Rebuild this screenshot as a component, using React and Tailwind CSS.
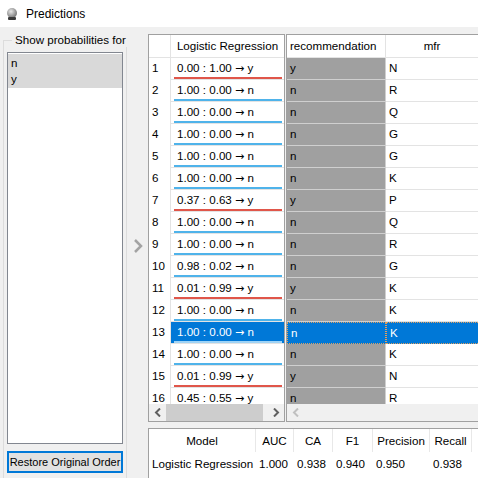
import React from "react";

const rows = [
  ["0.00 : 1.00", "y", "y", "N"],
  ["1.00 : 0.00", "n", "n", "R"],
  ["1.00 : 0.00", "n", "n", "Q"],
  ["1.00 : 0.00", "n", "n", "G"],
  ["1.00 : 0.00", "n", "n", "G"],
  ["1.00 : 0.00", "n", "n", "K"],
  ["0.37 : 0.63", "y", "y", "P"],
  ["1.00 : 0.00", "n", "n", "Q"],
  ["1.00 : 0.00", "n", "n", "R"],
  ["0.98 : 0.02", "n", "n", "G"],
  ["0.01 : 0.99", "y", "y", "K"],
  ["1.00 : 0.00", "n", "n", "K"],
  ["1.00 : 0.00", "n", "n", "K"],
  ["1.00 : 0.00", "n", "n", "K"],
  ["0.01 : 0.99", "y", "y", "N"],
  ["0.45 : 0.55", "y", "n", "R"],
];

const SELECTED = 12;

const scores = [
  ["Model", "Logistic Regression", "w-[107px]"],
  ["AUC", "1.000", "w-[38px]"],
  ["CA", "0.938", "w-[39px]"],
  ["F1", "0.940", "w-[40px]"],
  ["Precision", "0.950", "w-[57px]"],
  ["Recall", "0.938", "w-[42px]"],
];

function Chevron({ dir, color }) {
  return (
    <svg width="8" height="9" viewBox="0 0 8 9">
      <polyline
        points={dir === "left" ? "6,0.5 2,4.5 6,8.5" : "2,0.5 6,4.5 2,8.5"}
        fill="none"
        stroke={color}
        strokeWidth="2"
      />
    </svg>
  );
}

function PredCell({ text, cls, selected }) {
  const bar = selected
    ? "bg-[#9fd3f5]"
    : cls === "y"
    ? "bg-[#e0564a]"
    : "bg-[#4fb3ea]";
  return (
    <div
      className={`h-[22px] border-b border-[#e3e3e3] pt-[3px] pl-[2px] pr-[2px] ${
        selected ? "bg-[#0078d7] text-white" : ""
      }`}
    >
      <div className="leading-[14px] pl-[4px] whitespace-nowrap">
        {text}{" "}
        <span className="text-[11px]" style={{ fontFamily: '"DejaVu Sans", sans-serif' }}>
          →
        </span>{" "}
        {cls}
      </div>
      <div className={`h-[2px] mt-[1px] ml-[1px] ${bar}`} />
    </div>
  );
}

export default function App() {
  return (
    <div
      className="w-[478px] h-[478px] overflow-hidden bg-[#f0f0f0] text-[11.6px] text-black flex flex-col whitespace-nowrap"
      style={{ fontFamily: '"Liberation Sans", Arial, sans-serif' }}
    >
      <div className="h-[27px] bg-white flex items-center shrink-0">
        <svg width="12" height="14" viewBox="0 0 12 14" className="ml-[6px]">
          <defs>
            <radialGradient id="g" cx="0.4" cy="0.35" r="0.7">
              <stop offset="0" stopColor="#e8e8e8" />
              <stop offset="1" stopColor="#6e6e6e" />
            </radialGradient>
          </defs>
          <circle cx="6" cy="6" r="5" fill="url(#g)" />
          <rect x="2" y="10" width="8" height="3" rx="1" fill="#3a3a3a" />
        </svg>
        <span className="ml-[8px] text-[12px]">Predictions</span>
      </div>

      <div className="flex flex-1 min-h-0">
        <div className="w-[127px] pl-[3px] pt-[13px] shrink-0">
          <div className="relative h-[440px] border border-[#dcdcdc] px-[3px] pt-[11px]">
            <div className="absolute left-[8px] -top-[8px] bg-[#f0f0f0] px-[3px] leading-[14px]">
              Show probabilities for
            </div>
            <div className="h-[392px] border border-[#828790] bg-white">
              <div className="bg-[#d9d9d9] h-[17px] leading-[17px] pl-[3px] mt-[1px]">n</div>
              <div className="bg-[#d9d9d9] h-[17px] leading-[15px] pl-[3px]">y</div>
            </div>
            <div className="mt-[7px] h-[22px] border-2 border-[#0078d7] bg-[#e1e1e1] flex items-center justify-center text-[11px]">
              Restore Original Order
            </div>
          </div>
        </div>

        <div className="w-[21px] shrink-0 flex items-center justify-center pb-[14px]">
          <svg width="10" height="14" viewBox="0 0 10 14">
            <polyline points="2,1 8,7 2,13" fill="none" stroke="#a3a3a3" strokeWidth="2.5" />
          </svg>
        </div>

        <div className="flex-1 flex flex-col pt-[7px] min-w-0">
          <div className="flex h-[388px] shrink-0">
            <div className="w-[137px] border border-[#a0a0a0] bg-white flex flex-col shrink-0">
              <div className="flex h-[23px] border-b border-[#e3e3e3] shrink-0">
                <div className="w-[22px] border-r border-[#e3e3e3]" />
                <div className="flex-1 flex items-center justify-center">Logistic Regression</div>
              </div>
              <div className="flex h-[346px] overflow-hidden">
                <div className="w-[22px] border-r border-[#e3e3e3] shrink-0">
                  {rows.map((r, i) => (
                    <div key={i} className="h-[22px] pt-[3px] pl-[3px] leading-[14px]">
                      {i + 1}
                    </div>
                  ))}
                </div>
                <div className="flex-1">
                  {rows.map((r, i) => (
                    <PredCell key={i} text={r[0]} cls={r[1]} selected={i === SELECTED} />
                  ))}
                </div>
              </div>
              <div className="h-[17px] flex bg-[#f0f0f0] shrink-0">
                <div className="w-[17px] flex items-center justify-center">
                  <Chevron dir="left" color="#606060" />
                </div>
                <div className="w-[97px] bg-[#cdcdcd]" />
                <div className="flex-1" />
                <div className="w-[17px] flex items-center justify-center">
                  <Chevron dir="right" color="#606060" />
                </div>
              </div>
            </div>

            <div className="flex-1 ml-[1px] border-l border-t border-b border-[#a0a0a0] bg-white flex flex-col min-w-0">
              <div className="flex h-[23px] border-b border-[#e3e3e3] shrink-0">
                <div className="w-[99px] border-r border-[#e3e3e3] flex items-center pl-[3px]">
                  recommendation
                </div>
                <div className="flex-1 flex items-center justify-center">mfr</div>
              </div>
              <div className="h-[346px] overflow-hidden">
                {rows.map((r, i) => {
                  const sel = i === SELECTED;
                  return (
                    <div key={i} className="flex h-[22px]">
                      <div
                        className={`w-[99px] pl-[3px] pt-[3px] leading-[14px] border-b border-r ${
                          sel
                            ? "bg-[#0078d7] text-white border-[#e0a060] border-dotted border-t border-l"
                            : "bg-[#a0a0a0] border-[#cfcfcf]"
                        }`}
                      >
                        {r[2]}
                      </div>
                      <div
                        className={`flex-1 pl-[3px] pt-[3px] leading-[14px] border-b ${
                          sel
                            ? "bg-[#0078d7] text-white border-[#e0a060] border-dotted border-t border-l"
                            : "border-[#e3e3e3]"
                        }`}
                      >
                        {r[3]}
                      </div>
                    </div>
                  );
                })}
              </div>
              <div className="h-[17px] flex bg-[#f0f0f0] shrink-0">
                <div className="w-[17px] flex items-center justify-center">
                  <Chevron dir="left" color="#c0c0c0" />
                </div>
              </div>
            </div>
          </div>

          <div className="mt-[6px] flex-1 border-l border-t border-[#a0a0a0] bg-white flex">
            {scores.map(([h, v, w]) => (
              <div key={h} className={`${w} shrink-0 flex flex-col`}>
                <div className="h-[23px] flex items-center justify-center border-r border-[#e8e8e8]">
                  {h}
                </div>
                <div className="h-[23px] flex items-center pl-[3px]">{v}</div>
              </div>
            ))}
            <div className="flex-1">
              <div className="h-[23px]" />
            </div>
          </div>
        </div>
      </div>
    </div>
  );
}
